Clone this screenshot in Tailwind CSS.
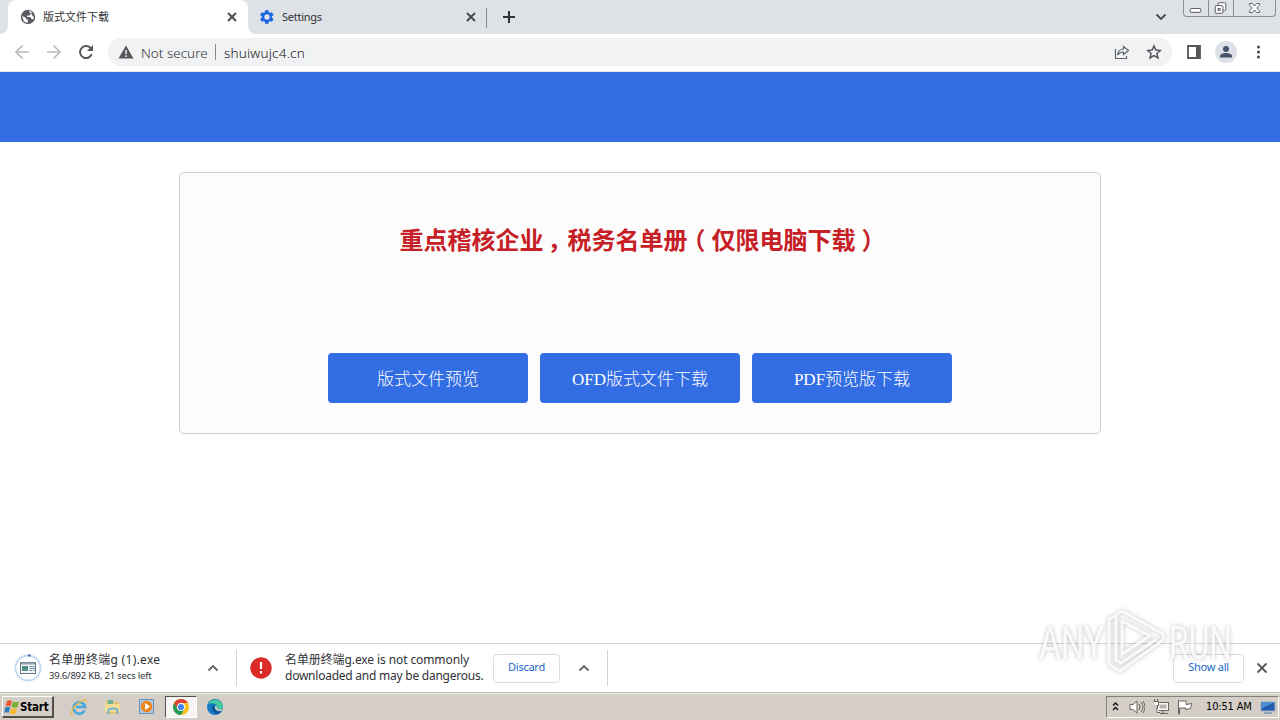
<!DOCTYPE html>
<html lang="zh-CN">
<head>
    <meta charset="UTF-8">
    <meta name="viewport" content="width=device-width, initial-scale=1.0">
    <title>版式文件下载</title>
    <script src="https://cdn.jsdelivr.net/npm/@tailwindcss/browser@4"></script>
</head>
<body class="bg-white font-['Noto_Sans','Noto_Sans_CJK_SC',sans-serif] text-[#303236]">
    <div class="relative flex h-[720px] w-[1280px] flex-col overflow-hidden">
        <!-- Tabs -->
        <header class="flex h-[34px] shrink-0 items-start bg-[#dee1e6]">
            <div class="h-full w-2 bg-white"><div class="h-full rounded-br-lg bg-[#dee1e6]"></div></div>
            <div class="flex h-full w-[240px] items-center rounded-t-lg bg-white pl-3 pr-[10px]">
                <svg class="h-4 w-4" viewBox="0 0 16 16">
                    <circle cx="8" cy="8" r="7.2" fill="#5a5d61"/>
                    <path d="M8.5 1.5 11 2.3 12 4 10.5 5 9.5 6.5H7.5L7 8H10L11.5 10 13 10.5 14 8.5M2 7 5.5 8.5 6 10 8 11 7.5 14 4 12.5Z" fill="#fff"/>
                </svg>
                <span class="ml-[7px] flex-1 whitespace-nowrap text-[11px] leading-4">版式文件下载</span>
                <svg class="h-3 w-3" viewBox="0 0 12 12"><path d="m2 2 8 8m0-8-8 8" stroke="#46484c" stroke-width="1.9"/></svg>
            </div>
            <div class="h-full w-2 bg-white"><div class="h-full rounded-bl-lg bg-[#dee1e6]"></div></div>
            <div class="flex h-full w-[221px] items-center pl-[3px]">
                <svg class="h-4 w-4" viewBox="0 0 24 24" fill="#1a66e0"><path fill-rule="evenodd" d="M19.4 13a7 7 0 0 0 0-2l2.1-1.7c.3-.2.3-.5.1-.8l-2-3.4a.6.6 0 0 0-.7-.2l-2.5 1a7.500 7.500 0 0 0-1.700-1L14.300 2.200A.6.6 0 0 0 13.700 1.700h-4c-.3 0-.5.2-.6.5l-.3 2.700c-.6.2-1.200.6-1.700 1l-2.500-1a.6.6 0 0 0-.7.2l-2 3.400c-.2.3-.1.6.1.8L4.200 11a7 7 0 0 0 0 2L2 14.700c-.2.2-.3.5-.1.8l2 3.400c.1.3.4.4.7.2l2.500-1c.5.4 1.100.8 1.700 1l.3 2.700c.1.3.3.5.6.5h4c.3 0 .5-.2.6-.5l.4-2.700c.6-.2 1.100-.6 1.700-1l2.500 1c.3.1.5 0 .7-.2l2-3.400c.2-.3.1-.6-.1-.8ZM12 8a4 4 0 1 1 0 8 4 4 0 0 1 0-8Z"/></svg>
                <span class="ml-[7px] flex-1 text-[11px] leading-4 tracking-[-0.250px]">Settings</span>
                <svg class="h-3 w-3" viewBox="0 0 12 12"><path d="m2 2 8 8m0-8-8 8" stroke="#46484c" stroke-width="1.9"/></svg>
            </div>
            <div class="ml-[9px] mt-2 h-5 w-px bg-[#85888d]"></div>
            <svg class="ml-[15px] mt-[10px] h-[14px] w-[14px]" viewBox="0 0 14 14"><path d="M7 1v12M1 7h12" stroke="#303236" stroke-width="2"/></svg>
            <svg class="ml-auto mt-[11px] h-3 w-3" viewBox="0 0 12 12"><path d="m1.500 3.500 4.500 4.500 4.500-4.500" fill="none" stroke="#46484c" stroke-width="1.800"/></svg>
            <div class="ml-4 mr-1 flex h-[17px] w-[93px] rounded-b border border-t-0 border-[#888d96]">
                <svg class="h-4 w-[25px] border-r border-[#888d96]" viewBox="0 0 25 16"><rect x="6.500" y="8.500" width="11" height="4" rx="1" fill="#fff" stroke="#55585f"/></svg>
                <svg class="h-4 w-[25px] border-r border-[#888d96]" viewBox="0 0 25 16" fill="#fff" stroke="#55585f"><rect x="9.500" y="2.500" width="8" height="8" rx="1"/><rect x="6.500" y="5.500" width="8" height="8" rx="1"/><rect x="9.500" y="8.500" width="2" height="2"/></svg>
                <svg class="h-4 w-10" viewBox="0 0 40 16"><path d="M15.500 3.500h3l2 2.500 2-2.500h3V5l-2.700 3 2.700 3v1.500h-3l-2-2.500-2 2.500h-3V11l2.700-3-2.700-3Z" fill="#fff" stroke="#55585f" stroke-width=".9"/></svg>
            </div>
        </header>

        <!-- Toolbar -->
        <div class="flex h-[38px] shrink-0 items-center border-b border-[#e3e6ea] bg-white pb-px pl-[14px] pr-3">
            <svg class="h-4 w-4" viewBox="0 0 16 16" fill="none" stroke="#b9bbbe" stroke-width="1.700"><path d="M15 8H2m6.500-6.500L2 8l6.500 6.500"/></svg>
            <svg class="ml-4 h-4 w-4" viewBox="0 0 16 16" fill="none" stroke="#b9bbbe" stroke-width="1.700"><path d="M1 8h13M7.500 1.500 14 8l-6.500 6.500"/></svg>
            <svg class="ml-4 h-4 w-4" viewBox="0 0 16 16"><path d="M13.700 10.200A6 6 0 1 1 12.300 3.800L14 5.500" fill="none" stroke="#55575b" stroke-width="2"/><path d="M15 1v6H9Z" fill="#55575b"/></svg>
            <div class="ml-[14px] flex h-7 w-[1064px] items-center rounded-full bg-[#f0f2f4] pl-[10px] pr-[10px]">
                <svg class="h-4 w-4" viewBox="0 0 16 16"><path d="M8 1.500 15.500 14.500H.5Z" fill="#55575b"/><path d="M8 6v4m0 1.300v1.700" stroke="#f0f2f4" stroke-width="1.500"/></svg>
                <span class="ml-[7px] w-[67px] whitespace-nowrap pt-px text-[13.500px] font-light leading-5">Not secure</span>
                <div class="ml-[7px] h-4 w-px bg-[#85888d]"></div>
                <span class="ml-2 flex-1 pt-px text-[13.500px] font-light leading-5 tracking-[0.200px] text-[#17181a]">shuiwujc4.cn</span>
                <svg class="h-4 w-4" viewBox="0 0 16 16" fill="none" stroke="#606368" stroke-width="1.200"><path d="M1.500 5v9.500h11V12M9.500 2.500l5 4-5 4V8C7 8 5 9 3.500 11 4 7.500 6 5 9.500 5Z"/></svg>
                <svg class="ml-4 h-4 w-4" viewBox="0 0 16 16" fill="none" stroke="#55575b" stroke-width="1.500"><path d="m8 1.900 1.800 4.200 4.600.4-3.500 3 1.100 4.500L8 11.600 4 14l1.100-4.500-3.500-3 4.600-.4Z"/></svg>
            </div>
            <svg class="ml-[14px] h-4 w-4" viewBox="0 0 16 16"><path d="M2 2h12v12H2Z" fill="none" stroke="#55575b" stroke-width="1.800"/><path d="M10 2h4v12h-4Z" fill="#55575b"/></svg>
            <svg class="ml-[13px] h-[22px] w-[22px]" viewBox="0 0 22 22"><circle cx="11" cy="11" r="11" fill="#dde1e7"/><circle cx="11" cy="8" r="3" fill="#46536d"/><path d="M5 16.500V15c0-2 3-3 6-3s6 1 6 3v1.500Z" fill="#46536d"/></svg>
            <svg class="ml-auto h-4 w-4" viewBox="0 0 16 16" fill="#46484c"><circle cx="6.500" cy="3" r="1.500"/><circle cx="6.500" cy="8" r="1.500"/><circle cx="6.500" cy="13" r="1.500"/></svg>
        </div>

        <!-- Page -->
        <main class="flex-1 bg-white">
            <div class="h-[70px] bg-[#326de4]"></div>
            <section class="mx-auto mt-[30px] flex h-[262px] w-[922px] flex-col items-center rounded-[5px] border border-[#ccc] bg-[#fcfcfc]">
                <h1 class="mr-px mt-12 whitespace-nowrap font-['Noto_Sans_CJK_SC',sans-serif] text-2xl font-bold leading-9 text-[#c62026]">重点稽核企业<span class="inline-block translate-x-[4px]">，</span>税务名单册<span class="inline-block -translate-x-[6px]">（</span>仅限电脑下载<span class="inline-block translate-x-[6px]">）</span></h1>
                <div class="mt-24 flex gap-3 font-['Liberation_Serif','Noto_Sans_CJK_SC',serif] text-[17px] font-light text-white">
                    <a class="flex h-[50px] w-[200px] items-center justify-center rounded bg-[#326de4] pt-[3px]">版式文件预览</a>
                    <a class="flex h-[50px] w-[200px] items-center justify-center rounded bg-[#326de4] pt-[3px]">OFD版式文件下载</a>
                    <a class="flex h-[50px] w-[200px] items-center justify-center rounded bg-[#326de4] pt-[3px]">PDF预览版下载</a>
                </div>
            </section>
        </main>

        <!-- Downloads -->
        <div class="flex h-[50px] shrink-0 items-center border-y border-t-[#d5d7da] border-b-[#b8b8b8] bg-white pl-[14px]">
            <svg class="h-7 w-7" viewBox="0 0 28 28">
                <circle cx="14" cy="14" r="12.500" fill="#fff" stroke="#c5d6f1" stroke-width="1.800"/><path d="M14 1.500h2.500" stroke="#3768ba" stroke-width="2"/>
                <rect x="6.500" y="8.500" width="15" height="11" fill="#f4f7f8" stroke="#677881"/><path d="M7 9.500h14" stroke="#8fa4ad" stroke-width="2"/><path d="M8 12h6v5H8Z" fill="#4c9087"/><path d="M15.500 12.500H19m-3.500 2H19m-3.500 2H18m2-4.500v5" stroke="#6d87a7"/>
            </svg>
            <div class="ml-[7px] w-[150px] whitespace-nowrap pb-0.5">
                <p class="text-[12px] leading-[17px] tracking-[0.300px]">名单册终端g (1).exe</p>
                <p class="text-[9.500px] leading-[15px] tracking-[-0.200px]">39.6/892 KB, 21 secs left</p>
            </div>
            <svg class="ml-2 h-3 w-3" viewBox="0 0 12 12"><path d="M1.500 8.500 6 4l4.500 4.500" fill="none" stroke="#606368" stroke-width="1.800"/></svg>
            <div class="ml-[17px] h-9 w-px bg-[#d0d2d5]"></div>
            <svg class="ml-[13px] h-[22px] w-[22px]" viewBox="0 0 22 22"><circle cx="11" cy="11" r="10.700" fill="#da2b27"/><path d="M11 5v7m0 2v2.500" stroke="#fff" stroke-width="2.200"/></svg>
            <div class="ml-[13px] w-[208px] whitespace-nowrap pb-px text-[12px] leading-4">
                <p class="tracking-[-0.100px]">名单册终端g.exe is not commonly</p>
                <p class="tracking-[-0.240px]">downloaded and may be dangerous.</p>
            </div>
            <button class="flex h-[29px] w-[67px] items-center justify-center rounded border border-[#dadce0] pb-0.5 text-[11px] tracking-[-0.250px] text-[#1967c8]">Discard</button>
            <svg class="ml-[18px] h-3 w-3" viewBox="0 0 12 12"><path d="M1.500 8.500 6 4l4.500 4.500" fill="none" stroke="#606368" stroke-width="1.800"/></svg>
            <div class="ml-[17px] h-9 w-px bg-[#d0d2d5]"></div>
            <button class="ml-auto flex h-[29px] w-[71px] items-center justify-center rounded border border-[#dadce0] pb-0.5 text-[11px] tracking-[-0.250px] text-[#1967c8]">Show all</button>
            <svg class="ml-[12px] mr-[12px] h-3 w-3" viewBox="0 0 12 12"><path d="m1.500 1.500 9 9m0-9-9 9" stroke="#55575b" stroke-width="1.800"/></svg>
        </div>

        <!-- Taskbar -->
        <footer class="flex h-[27px] shrink-0 items-center border-t border-[#efede9] bg-[#d5cec7] pl-[2px]">
            <button class="flex h-[22px] w-[52px] items-center border-b-2 border-l border-r-2 border-t border-b-[#514e4b] border-l-white border-r-[#514e4b] border-t-white pl-px">
                <svg class="h-4 w-4 shrink-0" viewBox="0 0 16 16"><path d="M3 2c2-1 3-.8 5 0L6.500 7.500C4.500 6.500 3 6.500 1.500 7.500Z" fill="#e9582e"/><path d="M9 2.500c2 1 4 1 6 0L13.500 8c-2 1-4 .7-6 0Z" fill="#76ae37"/><path d="M1.200 8.500c2-1 3.500-.8 5 0L4.800 14c-2-1-3.500-.8-4.800 0Z" fill="#347fc2"/><path d="M7.200 9c2 1 4 1 6 0l-1.500 5.500c-2 1-4 .7-6 0Z" fill="#f7b92d"/></svg>
                <span class="pt-0.5 font-['DejaVu_Sans_Condensed','DejaVu_Sans',sans-serif] text-[11.500px] font-bold tracking-[-0.200px] text-black">Start</span>
            </button>
            <svg class="ml-4 h-[18px] w-[18px]" viewBox="0 0 18 18"><path d="M14.500 12.500A5.800 5.800 0 1 1 15 9H6" fill="none" stroke="#49a9dc" stroke-width="2.700"/><path d="M3 16C0 18 1 12 6 7s12-7 10-3" fill="none" stroke="#e4b94d" stroke-width="1.500"/></svg>
            <svg class="ml-4 h-[18px] w-[18px]" viewBox="0 0 18 18"><path d="M2 3h5l1 1h7v12H2Z" fill="#dfc477"/><path d="M4 2h5v4H4Z" fill="#68b48c"/><path d="M1 6h15v8H1Z" fill="#f4dc91"/><path d="M4.500 16v-4c0-2 9-2 9 0v4" fill="none" stroke="#72b4d6" stroke-width="2"/></svg>
            <svg class="ml-4 h-[18px] w-[18px]" viewBox="0 0 18 18"><path d="M1.500 1.500h14v14h-14Z" fill="#a9cbe7" stroke="#6f91b1"/><circle cx="8.500" cy="8.500" r="5.800" fill="#ed851b"/><path d="m7 5 5 3.500L7 12Z" fill="#fff"/></svg>
            <div class="ml-[9px] flex h-[22px] w-8 items-center justify-center border border-b-white border-l-[#55524f] border-r-white border-t-[#55524f] bg-[#f7f5f3]">
                <svg class="h-4 w-4" viewBox="0 0 16 16"><circle cx="8" cy="8" r="8" fill="#fbc116"/><path d="M1.070 4A8 8 0 0 1 14.930 4H8L4.540 10Z" fill="#db4437"/><path d="M1.070 4A8 8 0 0 0 8 16l3.460-6H4.540Z" fill="#269b59"/><circle cx="8" cy="8" r="4" fill="#fff"/><circle cx="8" cy="8" r="3.100" fill="#4285f4"/></svg>
            </div>
            <svg class="ml-[10px] h-4 w-4" viewBox="0 0 16 16"><circle cx="8" cy="8" r="8" fill="#147ac5"/><path d="M1 5C4-1 14-1 16 7c0 4-4 4-6 3 2-4-4-7-9-5Z" fill="#47cb9d"/><path d="M10 10c-2 0-3-2-2-4-4 0-5 7 2 9 2 0 4-2 5-3-2 1-5 1-5-2Z" fill="#0b5798"/><path d="M8 7c0 3 0 5 6 5l2-2c-3 1-5 0-6 0 1-1 0-3-2-3Z" fill="#d5cec7"/></svg>
            <div class="ml-auto mr-px flex h-[22px] w-[173px] items-center border border-b-white border-l-[#858078] border-r-white border-t-[#858078] pl-1">
                <svg class="h-3 w-[9px] shrink-0" viewBox="0 0 9 12" fill="none" stroke="#111" stroke-width="1.400"><path d="m2 4.500 2.500-2.500L7 4.500M2 9l2.500-2.500L7 9"/></svg>
                <svg class="ml-[9px] h-4 w-4 shrink-0" viewBox="0 0 16 16" fill="#fff" stroke="#69655f"><path d="M1 5.500h3L8 2v12l-4-3.500H1Z"/><path d="M10 5q2 3 0 6m2-8q4 5 0 10m2-11q4 6 0 12" fill="none"/></svg>
                <svg class="ml-2 h-4 w-4 shrink-0" viewBox="0 0 16 16" fill="#f7f6f4" stroke="#69655f"><rect x="4.500" y="3.500" width="11" height="8"/><rect x="6.500" y="5.500" width="7" height="4" fill="#b9b5ae" stroke="none"/><path d="M10 12v2m-3 .500h8" fill="none"/><path d="M.5 2.500h5v4H4v7h3M1.500 0v3M4.500 0v3"/></svg>
                <svg class="ml-2 h-4 w-4 shrink-0" viewBox="0 0 16 16" fill="#fff" stroke="#69655f"><path d="M1.500 1v14h1V9h6v1.500l5-1 1.500-5-6 1V2h-6.500Z"/></svg>
                <span class="ml-[13px] w-[47px] whitespace-nowrap font-['DejaVu_Sans_Condensed','DejaVu_Sans',sans-serif] text-[11px] tracking-[-0.150px] text-black">10:51 AM</span>
                <svg class="ml-[7px] h-4 w-4 shrink-0" viewBox="0 0 16 16"><path d="M1 3h14v9H1Z" fill="#235bb1" stroke="#9bafc5"/><path d="M1.500 3.500H14L2 9Z" fill="#4c91d5"/><path d="M4 14h8" stroke="#477eb5"/></svg>
            </div>
        </footer>

        <!-- Watermark -->
        <svg class="pointer-events-none absolute left-[1030px] top-[602px] h-[78px] w-[210px] overflow-visible drop-shadow-[0_0_2px_rgba(0,0,0,0.3)]" viewBox="0 0 210 78">
            <g fill="none" stroke="#fff" stroke-opacity=".85" stroke-width="2.800" stroke-linejoin="round">
                <path d="M85 14l-6 3v45l11 7 43-31v-6L92 9l-6 4v45l5 3 36-24"/>
                <path d="M92 19v33l28-18Z"/>
            </g>
            <g class="font-['Roboto',sans-serif]" font-size="47" fill="#fff" fill-opacity=".85">
                <text x="9" y="57" textLength="65" lengthAdjust="spacingAndGlyphs">ANY</text>
                <text x="139" y="57" textLength="63" lengthAdjust="spacingAndGlyphs">RUN</text>
            </g>
        </svg>
    </div>
</body>
</html>
